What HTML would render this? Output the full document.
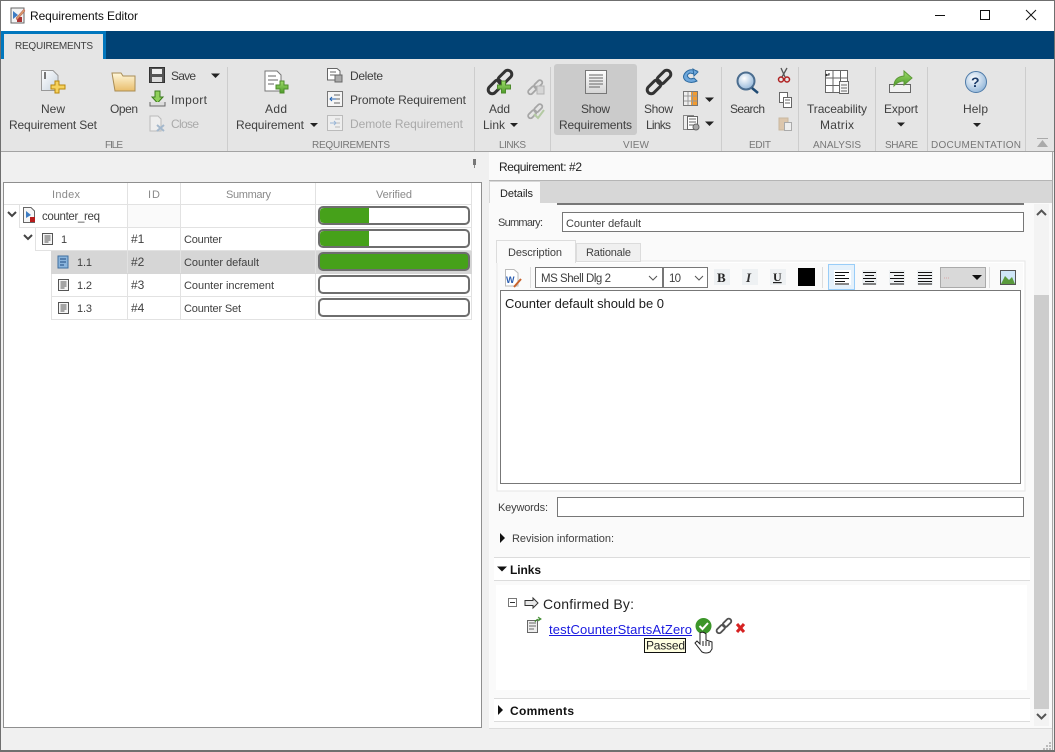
<!DOCTYPE html>
<html><head><meta charset="utf-8"><title>Requirements Editor</title>
<style>
html,body{margin:0;padding:0;width:1055px;height:752px;overflow:hidden;background:#f0f0f0}
svg{display:block;position:absolute;left:0;top:0}
text{font-family:"Liberation Sans",sans-serif;font-size:12px;fill:#404040;white-space:pre}
.g{fill:#aaa}.h{fill:#8a8a8a}.s{font-size:10px;fill:#777}.k{fill:#222}
</style></head><body>
<svg width="1055" height="752" viewBox="0 0 1055 752" xmlns="http://www.w3.org/2000/svg">
<defs>
<linearGradient id="pg" x1="0" y1="0" x2="1" y2="1"><stop offset="0" stop-color="#fff"/><stop offset="1" stop-color="#c8d4e0"/></linearGradient>
<linearGradient id="fo" x1="0" y1="0" x2="0" y2="1"><stop offset="0" stop-color="#fff8dc"/><stop offset="1" stop-color="#e9bd6b"/></linearGradient>
<linearGradient id="gb" x1="0" y1="0" x2="0" y2="1"><stop offset="0" stop-color="#9fdc6a"/><stop offset="1" stop-color="#4d9c2a"/></linearGradient>
<linearGradient id="ph" x1="0" y1="0" x2="0" y2="1"><stop offset="0" stop-color="#fff"/><stop offset="1" stop-color="#d4d4d4"/></linearGradient>
<radialGradient id="hb" cx=".4" cy=".35" r=".7"><stop offset="0" stop-color="#fff"/><stop offset="1" stop-color="#8fb4d8"/></radialGradient>
<g id="doc"><rect x=".5" y=".5" width="10" height="11" fill="#f4f4f4" stroke="#555"/><path d="M2.500 3H8.500M2.500 5H8.500M2.500 7H8.500M2.500 9H6.500" stroke="#555" fill="none"/></g>
<g id="chain" fill="none" stroke="#333" stroke-width="3"><g transform="rotate(-45 12 12)"><rect x="-3" y="8" width="16" height="8" rx="4"/><rect x="11" y="8" width="16" height="8" rx="4"/></g></g>
</defs>

<!-- window -->
<rect width="1055" height="752" fill="#6f6f6f"/>
<rect x="1" y="1" width="1053" height="30" fill="#fff"/>
<rect x="1" y="31" width="1053" height="28" fill="#004275"/>
<rect x="1" y="31" width="105" height="28" fill="#0076bd"/>
<rect x="4" y="34" width="99" height="25" fill="#e5e5e5"/>
<rect x="1" y="59" width="1053" height="92" fill="#e5e5e5"/>
<rect x="1" y="151" width="1053" height="1" fill="#a3a3a3"/>
<rect x="1" y="152" width="1053" height="598" fill="#f0f0f0"/>

<!-- title -->
<rect x="11" y="8" width="13" height="15" fill="#f3f3f3" stroke="#666"/>
<path d="M13 11L18 15L13 19Z" fill="#3d7cc2"/><rect x="17" y="17" width="5" height="5" fill="#a33"/>
<path d="M16 18L24 9L25 11L17 20Z" fill="#d99a6a" stroke="#a44" stroke-width=".5"/>
<text x="30" y="20" textLength="108" style="fill:#111">Requirements Editor</text>
<path d="M935 15.500H945" stroke="#111"/><rect x="980.500" y="10.500" width="9" height="9" fill="none" stroke="#111"/><path d="M1026 10L1036 20M1036 10L1026 20" stroke="#111"/>
<text x="15" y="49" textLength="78" style="font-size:10px">REQUIREMENTS</text>

<!-- ribbon separators -->
<path d="M227.500 67V151M474.500 67V151M550.500 67V151M721.500 67V151M798.500 67V151M875.500 67V151M927.500 67V151M1025.500 67V151" stroke="#cdcdcd"/>
<rect x="554" y="64" width="83" height="71" rx="3" fill="#cbcbcb"/>

<!-- new set icon -->
<path d="M41.500 70.500H53L58 75.500V90.500H41.500Z" fill="url(#pg)" stroke="#999"/><rect x="44" y="72" width="2" height="7" fill="#777"/>
<path d="M55 81H59V85H65V89H59V93H55V89H51V85H55Z" fill="#f6d25d" stroke="#b8860b"/>
<text x="41" y="113" textLength="24">New</text><text x="9" y="129" textLength="88">Requirement Set</text>
<!-- open -->
<path d="M112 73H121L123 76H135V91H115Z" fill="url(#fo)" stroke="#a98d55"/>
<text x="110" y="113" textLength="28">Open</text>
<!-- save -->
<rect x="149.500" y="67.500" width="15" height="15" fill="#555" stroke="#333"/><rect x="152" y="69" width="10" height="5" fill="#eee"/><rect x="152" y="77" width="10" height="5" fill="#ddd"/>
<text x="171" y="80" textLength="25">Save</text><path d="M211 73.500H220L215.500 78Z" fill="#222"/>
<!-- import -->
<path d="M155 91H160V97H163L157.500 103L152 97H155Z" fill="#8fd05a" stroke="#3c7a1e"/><path d="M150 102V106H165V102" fill="#ddd" stroke="#666"/>
<text x="171" y="104" textLength="36">Import</text>
<!-- close -->
<path d="M150 116H158L161 119V131H150Z" fill="#eee" stroke="#bbb"/><path d="M157 125L164 131M164 125L157 131" stroke="#a4b8cc" stroke-width="2"/>
<text x="171" y="128" textLength="28" class="g">Close</text>
<text x="105" y="148" textLength="18" class="s">FILE</text>

<!-- add req -->
<path d="M265 71H277L281 75V91H265Z" fill="#fff" stroke="#777"/><path d="M268 76H276M268 80H278M268 84H274" stroke="#666"/>
<path d="M280 81H284V85H288V89H284V93H280V89H276V85H280Z" fill="url(#gb)" stroke="#4d8a2c"/>
<text x="265" y="113" textLength="22">Add</text><text x="236" y="129" textLength="68">Requirement</text><path d="M310 123H318L314 127Z" fill="#222"/>
<!-- delete etc -->
<path d="M327.500 68.500H337L340 71V80H327.500Z" fill="#fff" stroke="#666"/><path d="M330 72H336M330 75H336" stroke="#666"/><rect x="335" y="75" width="7" height="7" fill="#aaa" stroke="#666"/>
<text x="350" y="80" textLength="33">Delete</text>
<rect x="327.500" y="91.500" width="15" height="15" fill="#f5f5f5" stroke="#777"/><path d="M334 95H340M334 99H340M334 103H340" stroke="#666"/><path d="M330 99H336M332 97L330 99L332 101" stroke="#2364b4" fill="none"/>
<text x="350" y="104" textLength="116">Promote Requirement</text>
<rect x="327.500" y="115.500" width="15" height="15" fill="#eee" stroke="#bbb"/><path d="M335 119H340M335 123H340M335 127H340" stroke="#bbb"/><path d="M330 123H336M334 121L336 123L334 125" stroke="#9ab6d6" fill="none"/>
<text x="350" y="128" textLength="113" class="g">Demote Requirement</text>
<text x="312" y="148" textLength="78" class="s">REQUIREMENTS</text>

<!-- add link -->
<use href="#chain" x="488" y="70"/><path d="M502 83H506V87H511V91H506V95H502V91H498V87H502Z" fill="url(#gb)" stroke="#4d8a2c" transform="translate(-.5 -2)"/>
<text x="489" y="113" textLength="21">Add</text><text x="483" y="129" textLength="22">Link</text><path d="M510 123H518L514 127Z" fill="#222"/>
<g opacity=".35"><use href="#chain" transform="translate(528 80) scale(.6)"/><rect x="537" y="86" width="7" height="8" fill="#bbb" stroke="#555"/><use href="#chain" transform="translate(528 104) scale(.6)"/><path d="M534 114L538 118L544 110" stroke="#5a9a2c" stroke-width="2" fill="none"/></g>

<!-- show req -->
<rect x="585.500" y="70.500" width="21" height="23" fill="url(#ph)" stroke="#777"/><path d="M589 75H603M589 78H603M589 81H603M589 84H603M589 87H600" stroke="#666"/>
<text x="581" y="113" textLength="29">Show</text><text x="559" y="129" textLength="73">Requirements</text>
<text x="623" y="148" textLength="26" class="s">VIEW</text><text x="499" y="148" textLength="27" class="s">LINKS</text>
<use href="#chain" x="647" y="70"/>
<text x="644" y="113" textLength="29">Show</text><text x="646" y="129" textLength="25">Links</text>
<!-- view small -->
<path d="M697 71Q690 68 686 72Q681 77 686 81Q691 84 697 81L694 78Q690 80 688 77Q686 75 690 73L694 74Z" fill="#6fa8dc" stroke="#2c6aa0"/><path d="M693 69L698 72L694 76Z" fill="#6fa8dc" stroke="#2c6aa0"/>
<rect x="683.500" y="91.500" width="14" height="14" fill="#eee" stroke="#777"/><rect x="691" y="92" width="6" height="13" fill="#f29b30"/><path d="M684 96H697M684 101H697M688 92V105M692.500 92V105" stroke="#999"/>
<path d="M705 97.500H714L709.500 102Z" fill="#222"/>
<rect x="683.500" y="115.500" width="10" height="14" fill="#eee" stroke="#888"/><rect x="687.500" y="116.500" width="10" height="13" fill="#fff" stroke="#666"/><path d="M689 119H696M689 122H696M689 125H696" stroke="#666"/><circle cx="696" cy="127" r="3" fill="#aaa" stroke="#666"/>
<path d="M705 121.500H714L709.500 126Z" fill="#222"/>

<!-- search -->
<circle cx="746" cy="81" r="8.500" fill="url(#hb)" stroke="#4b6d8f" stroke-width="2"/><path d="M752 88L758 93" stroke="#1f4a73" stroke-width="2.500"/>
<text x="730" y="113" textLength="35">Search</text>
<path d="M787 68L782 77M781 68L785 77" stroke="#555" stroke-width="1.300"/><circle cx="781" cy="79.500" r="2.500" fill="none" stroke="#b02020" stroke-width="1.500"/><circle cx="787" cy="79.500" r="2.500" fill="none" stroke="#b02020" stroke-width="1.500"/>
<rect x="779.500" y="92.500" width="8" height="10" fill="#fff" stroke="#666"/><rect x="783.500" y="97.500" width="8" height="10" fill="#fff" stroke="#666"/><path d="M785 100H790M785 103H790" stroke="#666"/>
<rect x="779" y="118" width="9" height="12" fill="#dcc6ac" stroke="#c9b8a0"/><rect x="784.500" y="122.500" width="7" height="8" fill="#eee" stroke="#aaa"/>
<text x="749" y="148" textLength="22" class="s">EDIT</text>

<!-- traceability -->
<rect x="825.500" y="70.500" width="22" height="22" fill="#fff" stroke="#666"/><path d="M825 78H848M825 85.500H848M833 70V93M840.500 70V93" stroke="#666"/><path d="M829 73V75H826M827 74L826 75L827 76" stroke="#222" fill="none"/>
<rect x="839.500" y="81.500" width="9" height="12" fill="#f6f6f6" stroke="#666"/><path d="M841 85H847M841 88H847M841 91H847" stroke="#666"/>
<text x="807" y="113" textLength="60">Traceability</text><text x="820" y="129" textLength="34">Matrix</text>
<text x="813" y="148" textLength="48" class="s">ANALYSIS</text>

<!-- export -->
<rect x="889.500" y="84.500" width="21" height="8" fill="#f2f2f2" stroke="#666"/>
<path d="M894 86Q894 77 904 76V71L912 78L904 85V81Q898 81 894 86Z" fill="url(#gb)" stroke="#5d9a38"/>
<text x="884" y="113" textLength="34">Export</text><path d="M897 122.500H905L901 126.500Z" fill="#222"/>
<text x="885" y="148" textLength="33" class="s">SHARE</text>

<!-- help -->
<circle cx="976" cy="82" r="10.500" fill="url(#hb)" stroke="#4d7aa8"/><text x="971" y="87" style="font-size:14px;font-weight:bold;fill:#1d3d6b">?</text>
<text x="963" y="113" textLength="25">Help</text><path d="M973 123H981L977 127Z" fill="#222"/>
<text x="931" y="148" textLength="90" class="s">DOCUMENTATION</text>
<!-- collapse -->
<rect x="1037" y="138" width="11" height="1" fill="#aaa"/><path d="M1042.500 140L1048 147H1037Z" fill="#aaa"/>

<!-- left panel -->
<rect x="473" y="159" width="3" height="6" fill="#777"/><rect x="474" y="165" width="1" height="3" fill="#888"/>
<rect x="3.500" y="182.500" width="478" height="545" fill="#fff" stroke="#8f8f8f"/>
<path d="M127.500 183V320M180.500 183V320M315.500 183V320M471.500 183V320" stroke="#e2e2e2"/>
<path d="M4 204.500H472M19 227.500H472M35 250.500H472M51 273.500H472M51 296.500H472M51 319.500H472M19.500 205V227M35.500 228V250M51.500 251V320" stroke="#e2e2e2"/>
<rect x="128" y="205" width="52" height="22" fill="#fafafa"/>
<rect x="51" y="251" width="421" height="23" fill="#d6d6d6"/>
<path d="M127.500 251V273M180.500 251V273M315.500 251V273" stroke="#e2e2e2"/>
<text x="52" y="198" textLength="28" class="h" style="font-size:11px">Index</text>
<text x="148" y="198" textLength="12" class="h" style="font-size:11px">ID</text>
<text x="226" y="198" textLength="45" class="h" style="font-size:11px">Summary</text>
<text x="376" y="198" textLength="36" class="h" style="font-size:11px">Verified</text>
<path d="M8 212L12 216L16 212M24 235L28 239L32 235" fill="none" stroke="#444" stroke-width="2"/>
<path d="M23.500 207.500H31L34.500 211V222.500H23.500Z" fill="#f6f6f6" stroke="#666"/><path d="M26 211L31 215L26 218Z" fill="#3d7cc2"/><rect x="30" y="217" width="5" height="5" fill="#b71c1c"/>
<text x="42" y="220" textLength="58" style="font-size:11.500px">counter_req</text>
<use href="#doc" x="42" y="233"/>
<rect x="58" y="256" width="10" height="12" fill="#8ab4dc" stroke="#3f6fa0"/><path d="M60 259H66M60 262H66M60 265H64" stroke="#1f4a80"/>
<use href="#doc" x="58" y="279"/><use href="#doc" x="58" y="302"/>
<text x="61" y="243" textLength="6" style="font-size:11px">1</text>
<text x="77" y="266" textLength="15" style="font-size:11px">1.1</text><text x="77" y="289" textLength="15" style="font-size:11px">1.2</text><text x="77" y="312" textLength="15" style="font-size:11px">1.3</text>
<text x="131" y="243" style="font-size:12px">#1</text><text x="131" y="266" style="font-size:12px">#2</text><text x="131" y="289" style="font-size:12px">#3</text><text x="131" y="312" style="font-size:12px">#4</text>
<text x="184" y="243" textLength="38" style="font-size:11px">Counter</text><text x="184" y="266" textLength="75" style="font-size:11px">Counter default</text><text x="184" y="289" textLength="90" style="font-size:11px">Counter increment</text><text x="184" y="312" textLength="57" style="font-size:11px">Counter Set</text>
<!-- bars -->
<g stroke="#6e6e6e" stroke-width="2">
<rect x="319" y="207" width="150" height="17" rx="4" fill="#fff"/>
<rect x="319" y="230" width="150" height="17" rx="4" fill="#fff"/>
<rect x="319" y="253" width="150" height="17" rx="4" fill="#46a11a"/>
<rect x="319" y="276" width="150" height="17" rx="4" fill="#fff"/>
<rect x="319" y="299" width="150" height="17" rx="4" fill="#fff"/>
</g>
<path d="M320 212Q320 208 324 208H369V223H324Q320 223 320 219ZM320 235Q320 231 324 231H369V246H324Q320 246 320 242Z" fill="#46a11a"/>

<!-- right panel -->
<rect x="489" y="152" width="563" height="576" fill="#fafafa"/>
<rect x="489" y="180" width="563" height="1" fill="#b5b5b5"/>
<rect x="489" y="181" width="563" height="22" fill="#d7d7d7"/>
<rect x="490" y="182" width="50" height="21" fill="#fafafa"/>
<rect x="489" y="728" width="563" height="1" fill="#dcdcdc"/>
<text x="499" y="171" textLength="83" class="k">Requirement: #2</text>
<text x="500" y="197" textLength="33" class="k" style="font-size:11px">Details</text>
<rect x="557" y="203" width="467" height="2" fill="#777"/>
<rect x="1034" y="204" width="15" height="522" fill="#f3f3f3"/>
<rect x="1034" y="295" width="15" height="414" fill="#cdcdcd"/>
<path d="M1037 215L1041.500 210.500L1046 215M1037 714L1041.500 718.500L1046 714" fill="none" stroke="#555" stroke-width="2"/>
<text x="498" y="226" textLength="45" style="font-size:11px">Summary:</text>
<rect x="562.500" y="212.500" width="461" height="19" fill="#fff" stroke="#777"/>
<text x="566" y="227" textLength="75" style="font-size:11px">Counter default</text>
<!-- tabs -->
<rect x="497" y="261" width="528" height="230" fill="#fff" stroke="#e5e5e5"/>
<rect x="576.500" y="243.500" width="64" height="18" fill="#f0f0f0" stroke="#dcdcdc"/>
<rect x="496.500" y="240.500" width="79" height="22" fill="#fafafa" stroke="#dcdcdc"/>
<rect x="497" y="260" width="78" height="3" fill="#fafafa"/>
<rect x="498" y="263" width="525" height="27" fill="#fafafa"/>
<text x="508" y="256" textLength="54" style="font-size:11px">Description</text>
<text x="586" y="256" textLength="45" style="font-size:11px">Rationale</text>
<!-- toolbar -->
<path d="M505.500 269.500H514L518 273V286H505.500Z" fill="#fff" stroke="#bbb"/><text x="506" y="283" style="font-size:9px;font-weight:bold;fill:#2a5db0">W</text><path d="M514 287L521 279" stroke="#c7622c" stroke-width="2"/>
<path d="M530.500 267V288M822.500 267V288M989.500 267V288" stroke="#ddd"/>
<rect x="535.500" y="267.500" width="127" height="20" fill="#fff" stroke="#777"/><rect x="663.500" y="267.500" width="44" height="20" fill="#fff" stroke="#777"/>
<text x="541" y="282" textLength="70" style="font-size:11.500px">MS Shell Dlg 2</text><text x="669" y="282" textLength="12" style="font-size:11.500px">10</text>
<path d="M649 276L653 280L657 276M695 276L699 280L703 276" fill="none" stroke="#555"/>
<rect x="714" y="269" width="16" height="16" fill="#eef1f3"/><rect x="742" y="269" width="16" height="16" fill="#eef1f3"/><rect x="770" y="269" width="16" height="16" fill="#eef1f3"/>
<text x="717" y="282" style="font-family:'Liberation Serif',serif;font-size:13px;font-weight:bold;fill:#222">B</text><text x="746" y="282" style="font-family:'Liberation Serif',serif;font-size:13px;font-weight:bold;font-style:italic;fill:#333">I</text><text x="773" y="281" style="font-family:'Liberation Serif',serif;font-size:12px;font-weight:bold;fill:#222;text-decoration:underline">U</text>
<rect x="798" y="268" width="17" height="18" fill="#000"/>
<rect x="828.500" y="264.500" width="26" height="25" fill="#e5f1fb" stroke="#99cdf8"/>
<rect x="834" y="270" width="17" height="15" fill="#fff"/>
<rect x="862" y="270" width="15" height="15" fill="#eef1f3"/><rect x="889" y="270" width="16" height="15" fill="#eef1f3"/><rect x="917" y="270" width="16" height="15" fill="#eef1f3"/>
<path d="M835 272.500H849M835 275.500H845M835 278.500H849M835 281.500H845M835 284H849M863 272.500H876M865 275.500H874M863 278.500H876M865 281.500H874M863 284H876M890 272.500H904M894 275.500H904M890 278.500H904M894 281.500H904M890 284H904M918 272.500H932M918 275.500H932M918 278.500H932M918 281.500H932M918 284H932" stroke="#111"/>
<rect x="940.500" y="267.500" width="45" height="20" fill="#d9d9d9" stroke="#aaa"/><path d="M944 278H950" stroke="#d8a8a8" stroke-dasharray="1 1"/><path d="M972 275H982L977 280Z" fill="#111"/>
<rect x="1000.500" y="270.500" width="15" height="14" fill="#cfe6f7" stroke="#555"/><path d="M1001 284L1005 276L1009 280L1012 277L1015 284Z" fill="#5a9a3c"/>
<!-- editor -->
<rect x="500.500" y="290.500" width="520" height="193" fill="#fff" stroke="#777"/>
<text x="505" y="308" textLength="159" style="font-size:13px;fill:#1c1c1c">Counter default should be 0</text>
<!-- keywords -->
<text x="498" y="511" textLength="50" style="font-size:11px">Keywords:</text>
<rect x="557.500" y="497.500" width="466" height="19" fill="#fff" stroke="#777"/>
<path d="M500 533L505 538L500 543Z" fill="#111"/>
<text x="512" y="542" textLength="102" style="font-size:11px">Revision information:</text>
<!-- links -->
<rect x="494" y="557" width="536" height="1" fill="#dcdcdc"/><rect x="494" y="580" width="536" height="1" fill="#dcdcdc"/>
<rect x="494" y="558" width="536" height="22" fill="#fff"/>
<path d="M497 566.500H507L502 571.500Z" fill="#111"/>
<text x="510" y="574" textLength="31" style="font-weight:bold;fill:#111">Links</text>
<rect x="496" y="585" width="531" height="105" fill="#fff"/>
<rect x="508.500" y="598.500" width="8" height="8" fill="#fff" stroke="#777"/><path d="M510 602.500H515" stroke="#333"/>
<path d="M525 600.500H533V598L538 603L533 608V605.500H525Z" fill="#e8e8e8" stroke="#333"/>
<text x="543" y="609" textLength="91" style="font-size:14px;fill:#222">Confirmed By:</text>
<rect x="527.500" y="620.500" width="10" height="12" fill="#eee" stroke="#666"/><path d="M529 623H536M529 626H536M529 629H534" stroke="#666"/><path d="M535 622Q536 619 540 619M538 617L541 619L538 621" fill="none" stroke="#3c8a2c"/>
<text x="549" y="634" textLength="143" style="font-size:13px;fill:#1a1ae0">testCounterStartsAtZero</text><rect x="549" y="635" width="143" height="1" fill="#1a1ae0"/>
<circle cx="703.500" cy="626" r="8" fill="#3c962a"/><path d="M699.500 626L702.500 629L708 623" fill="none" stroke="#fff" stroke-width="2"/>
<g transform="translate(716.500 618.500) scale(.62)"><use href="#chain" style="opacity:.85"/></g>
<path d="M737 624L744 632M744 624L737 632" stroke="#d62222" stroke-width="3"/>
<rect x="644.500" y="638.500" width="41" height="14" fill="#ffffe1" stroke="#111"/>
<text x="646" y="649.500" textLength="39" style="font-size:12px;fill:#222">Passed</text>
<path d="M700 633V644L697 641L695 643L702 652Q706 654 710 652L712 649V642L706 640V634Q703 631 700 633Z" fill="#fff" stroke="#222"/><path d="M703 641V646M706 641V646M709 642V646" stroke="#222"/>
<!-- comments -->
<rect x="494" y="698" width="536" height="1" fill="#dcdcdc"/><rect x="494" y="721" width="536" height="1" fill="#dcdcdc"/>
<rect x="494" y="699" width="536" height="22" fill="#fff"/>
<path d="M498 705L503 710L498 715Z" fill="#111"/>
<text x="510" y="715" textLength="64" style="font-weight:bold;fill:#111">Comments</text>
<!-- grip -->
<path d="M1049 742h2v2h-2zM1046 745h2v2h-2zM1049 745h2v2h-2zM1043 748h2v2h-2zM1046 748h2v2h-2zM1049 748h2v2h-2z" fill="#bbb"/>
<rect x="1052" y="152" width="1" height="598" fill="#a8a8a8"/>
</svg>
</body></html>
